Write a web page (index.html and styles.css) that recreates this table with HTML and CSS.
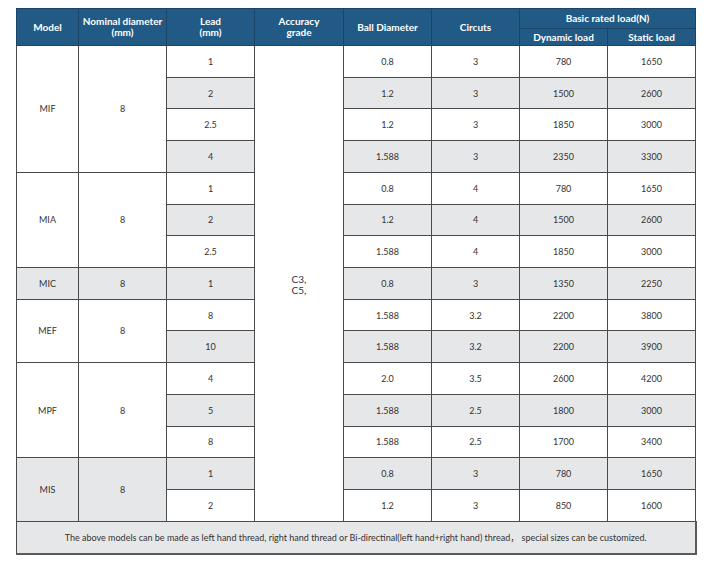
FILE: index.html
```html
<!DOCTYPE html>
<html lang="en">
<head>
<meta charset="utf-8">
<title>Miniature ball screw specifications</title>
<link rel="stylesheet" href="styles.css">
</head>
<body>
<table class="spec">
  <colgroup>
    <col class="c-model"><col class="c-std"><col class="c-std"><col class="c-acc"><col class="c-std"><col class="c-std"><col class="c-std"><col class="c-std">
  </colgroup>
  <thead>
    <tr class="h1">
      <th rowspan="2">Model</th>
      <th rowspan="2">Nominal diameter<br>(mm)</th>
      <th rowspan="2">Lead<br>(mm)</th>
      <th rowspan="2">Accuracy<br>grade</th>
      <th rowspan="2">Ball Diameter</th>
      <th rowspan="2">Circuts</th>
      <th colspan="2">Basic rated load(N)</th>
    </tr>
    <tr class="h2">
      <th>Dynamic load</th>
      <th>Static load</th>
    </tr>
  </thead>
  <tbody>
    <tr><td rowspan="4">MIF</td><td rowspan="4">8</td><td>1</td><td rowspan="15" class="acc"><span>C3,<br>C5,</span></td><td>0.8</td><td>3</td><td>780</td><td>1650</td></tr>
    <tr class="g"><td>2</td><td>1.2</td><td>3</td><td>1500</td><td>2600</td></tr>
    <tr><td>2.5</td><td>1.2</td><td>3</td><td>1850</td><td>3000</td></tr>
    <tr class="g"><td>4</td><td>1.588</td><td>3</td><td>2350</td><td>3300</td></tr>
    <tr><td rowspan="3">MIA</td><td rowspan="3">8</td><td>1</td><td>0.8</td><td>4</td><td>780</td><td>1650</td></tr>
    <tr class="g"><td>2</td><td>1.2</td><td>4</td><td>1500</td><td>2600</td></tr>
    <tr><td>2.5</td><td>1.588</td><td>4</td><td>1850</td><td>3000</td></tr>
    <tr class="g"><td>MIC</td><td>8</td><td>1</td><td>0.8</td><td>3</td><td>1350</td><td>2250</td></tr>
    <tr><td rowspan="2">MEF</td><td rowspan="2">8</td><td>8</td><td>1.588</td><td>3.2</td><td>2200</td><td>3800</td></tr>
    <tr class="g"><td>10</td><td>1.588</td><td>3.2</td><td>2200</td><td>3900</td></tr>
    <tr><td rowspan="3">MPF</td><td rowspan="3">8</td><td>4</td><td>2.0</td><td>3.5</td><td>2600</td><td>4200</td></tr>
    <tr class="g"><td>5</td><td>1.588</td><td>2.5</td><td>1800</td><td>3000</td></tr>
    <tr><td>8</td><td>1.588</td><td>2.5</td><td>1700</td><td>3400</td></tr>
    <tr class="g"><td rowspan="2">MIS</td><td rowspan="2">8</td><td>1</td><td>0.8</td><td>3</td><td>780</td><td>1650</td></tr>
    <tr><td>2</td><td>1.2</td><td>3</td><td>850</td><td>1600</td></tr>
  </tbody>
  <tfoot>
    <tr><td colspan="8">The above models can be made as left hand thread, right hand thread or Bi-directinal(left hand+right hand) thread， special sizes can be customized.</td></tr>
  </tfoot>
</table>
</body>
</html>
```

FILE: styles.css
```css
html, body {
  margin: 0;
  padding: 0;
  background: #ffffff;
}

body {
  padding: 8px 0 0 16px;
  font-family: Lato, "Noto Sans", "Noto Sans CJK SC", sans-serif;
  color: #333333;
}

.spec {
  border-collapse: collapse;
  table-layout: fixed;
  width: 680px;
}

.c-model { width: 62px; }
.c-std { width: 88px; }
.c-acc { width: 89px; }

.spec th {
  background: #225a86;
  color: #ffffff;
  font-weight: 700;
  font-size: 10px;
  line-height: 11px;
  text-align: center;
  vertical-align: middle;
  border: 1px solid #1b4467;
  padding: 0;
}

.spec .h1 th { height: 19px; }
.spec .h2 th { height: 16px; }

.spec td {
  border: 1px solid #4a4a4a;
  height: 30.73px;
  padding: 0;
  text-align: center;
  vertical-align: middle;
  font-size: 9px;
  line-height: 11px;
  background: #ffffff;
}

.spec tr.g td {
  background: #e6e7e9;
}

.spec td.acc {
  background: #ffffff;
  font-size: 10px;
  line-height: 11px;
}

.acc span {
  display: inline-block;
  text-align: left;
  padding-top: 4px;
}

.spec tfoot td {
  background: #e6e7e9;
  height: 31px;
  font-size: 9px;
  border-bottom: 2px solid #5a5a5a;
  border-right: 2px solid #5a5a5a;
}
```
